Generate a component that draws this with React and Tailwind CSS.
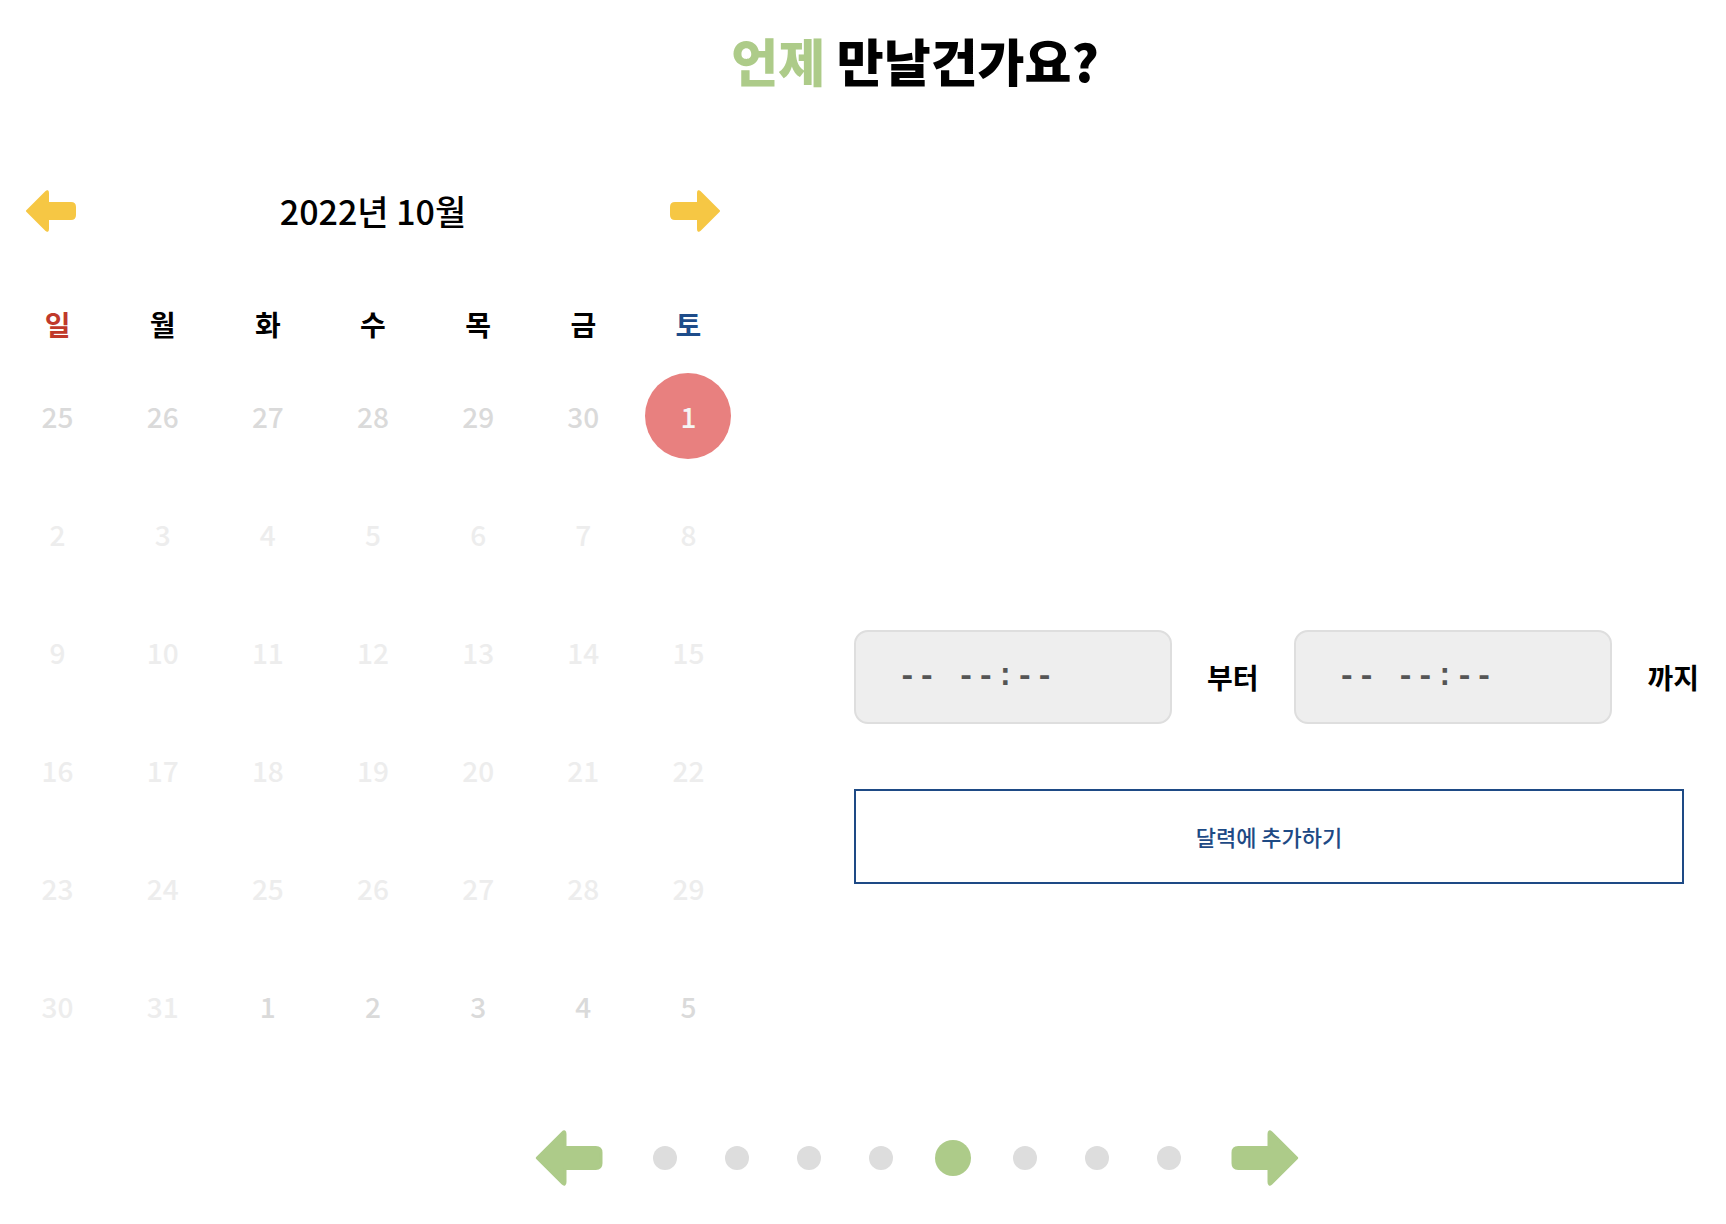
import { useState } from 'react';

const WEEKDAYS = ['일', '월', '화', '수', '목', '금', '토'];

// 2022년 10월, 앞뒤 달 날짜 포함
const DAYS = [
    ...[25, 26, 27, 28, 29, 30].map((d) => ({ d, kind: 'other' })),
    ...Array.from({ length: 31 }, (_, i) => ({ d: i + 1, kind: 'cur' })),
    ...[1, 2, 3, 4, 5].map((d) => ({ d, kind: 'other' })),
];

function BlockArrow({ dir = 'left', color, className }) {
    const path = 'M2 21 L21 2 Q23 0 23 3 L23 13 L46 13 Q50 13 50 17 L50 25 Q50 29 46 29 L23 29 L23 39 Q23 42 21 40 Z';
    return (
        <svg viewBox="0 0 51 42" className={className} style={{ transform: dir === 'right' ? 'scaleX(-1)' : undefined }}>
            <path d={path} fill={color} stroke={color} strokeWidth="2" strokeLinejoin="round" />
        </svg>
    );
}

function Calendar({ selected, onSelect }) {
    return (
        <div className="ml-[5px] w-[736px]">
            <div className="h-[60px] px-[20px] flex items-center justify-between">
                <button className="w-[51px] h-[42px]">
                    <BlockArrow color="#f6c744" className="w-[51px] h-[42px]" />
                </button>
                <div className="text-[34px] font-medium text-black leading-none">2022년 10월</div>
                <button className="w-[51px] h-[42px]">
                    <BlockArrow dir="right" color="#f6c744" className="w-[51px] h-[42px]" />
                </button>
            </div>

            <div className="mt-[50px] grid grid-cols-7 h-[66px] items-center">
                {WEEKDAYS.map((w, i) => (
                    <div
                        key={w}
                        className={`text-center text-[28px] font-bold ${i === 0 ? 'text-[#c0392b]' : i === 6 ? 'text-[#1e4c8a]' : 'text-black'}`}
                    >
                        {w}
                    </div>
                ))}
            </div>

            <div className="grid grid-cols-7">
                {DAYS.map((day, idx) => {
                    const isSel = day.kind === 'cur' && day.d === selected;
                    return (
                        <div key={idx} className="h-[118px] flex items-center justify-center">
                            {isSel ? (
                                <button
                                    onClick={() => onSelect(day.d)}
                                    className="w-[86px] h-[86px] rounded-full bg-[#e8807f] text-[#f5f5f5] text-[28px] font-medium flex items-center justify-center"
                                >
                                    {day.d}
                                </button>
                            ) : (
                                <span
                                    className={`text-[28px] font-medium ${day.kind === 'other' ? 'text-[#dadada]' : 'text-[#ededed]'}`}
                                >
                                    {day.d}
                                </span>
                            )}
                        </div>
                    );
                })}
            </div>
        </div>
    );
}

function TimeBox() {
    return (
        <div className="w-[318px] h-[94px] rounded-[14px] bg-[#eeeeee] border-2 border-[#dedede] flex items-center pl-[42px]">
            <span className="font-['Liberation_Mono',monospace] text-[31px] font-bold tracking-[1px] text-[#555555]">-- --:--</span>
        </div>
    );
}

export default function App() {
    const [selected, setSelected] = useState(1);
    const dots = [0, 1, 2, 3, 4, 5, 6, 7];
    const active = 4;

    return (
        <div className="min-h-screen w-full overflow-hidden bg-white font-['Noto_Sans_CJK_KR','Noto_Sans',sans-serif]">
            <div className="w-[1830px]">
                <h1 className="pt-[35px] text-center text-[51px] leading-none font-black text-black">
                    <span className="text-[#adcb89]">언제</span> 만날건가요?
                </h1>

                <div className="mt-[95px] flex">
                    <Calendar selected={selected} onSelect={setSelected} />

                    <div className="ml-[113px] pt-[449px]">
                        <div className="flex items-center">
                            <TimeBox />
                            <span className="mx-[35px] text-[28px] font-bold text-black">부터</span>
                            <TimeBox />
                            <span className="ml-[36px] text-[28px] font-bold text-black">까지</span>
                        </div>
                        <button className="mt-[65px] w-[830px] h-[95px] border-2 border-[#1e4a85] flex items-center justify-center text-[22px] font-medium text-[#1e4a85]">
                            달력에 추가하기
                        </button>
                    </div>
                </div>

                <div className="mt-[65px] h-[56px] pl-[4px] flex items-center justify-center">
                    <BlockArrow color="#adcb89" className="w-[69px] h-[56px]" />
                    <div className="mx-[26px] flex items-center">
                        {dots.map((i) => (
                            <div key={i} className="w-[72px] flex items-center justify-center">
                                <div
                                    className={i === active ? 'w-[36px] h-[36px] rounded-full bg-[#adcb89]' : 'w-[24px] h-[24px] rounded-full bg-[#dddddd]'}
                                />
                            </div>
                        ))}
                    </div>
                    <BlockArrow dir="right" color="#adcb89" className="w-[69px] h-[56px]" />
                </div>
            </div>
        </div>
    );
}
